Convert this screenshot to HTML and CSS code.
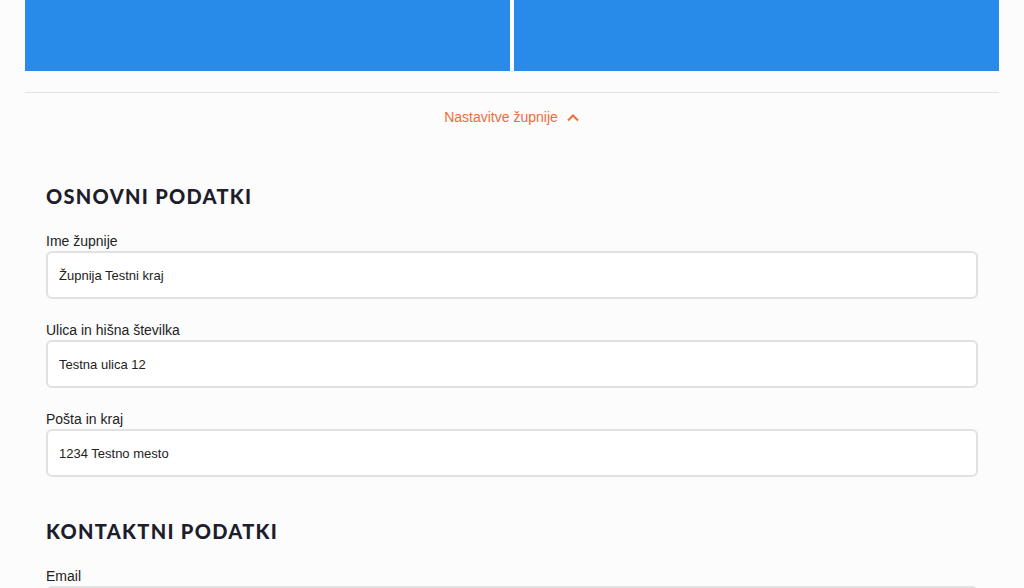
FILE: index.html
```html
<!DOCTYPE html>
<html lang="sl">
<head>
  <meta charset="UTF-8" />
  <meta name="viewport" content="width=device-width, initial-scale=1.0" />
  <title>Nastavitve župnije</title>
  <link rel="stylesheet" href="styles.css">
</head>
<body>
  <div class="page">
    <div class="tiles">
      <div class="tile"></div>
      <div class="tile"></div>
    </div>

    <div class="settings-toggle">
      <button class="toggle-btn">
        Nastavitve župnije
        <svg width="14" height="9" viewBox="0 0 14 9"><path d="M2 7.5 L7 2.5 L12 7.5" fill="none" stroke="currentColor" stroke-width="2"/></svg>
      </button>
    </div>

    <form class="settings">
      <h2>Osnovni podatki</h2>
      <div class="field">
        <label for="ime">Ime župnije</label>
        <input type="text" id="ime" value="Župnija Testni kraj" />
      </div>
      <div class="field">
        <label for="ulica">Ulica in hišna številka</label>
        <input type="text" id="ulica" value="Testna ulica 12" />
      </div>
      <div class="field">
        <label for="posta">Pošta in kraj</label>
        <input type="text" id="posta" value="1234 Testno mesto" />
      </div>

      <h2 class="next">Kontaktni podatki</h2>
      <div class="field">
        <label for="email">Email</label>
        <input type="text" id="email" value="" />
      </div>
    </form>
  </div>
</body>
</html>
```

FILE: styles.css
```css
html, body {
  margin: 0;
  padding: 0;
}

body {
  font-family: 'Liberation Sans', Arial, sans-serif;
  background: #fcfcfc;
  color: #222;
}

.page {
  padding: 0 25px;
}

.tiles {
  display: grid;
  grid-template-columns: 1fr 1fr;
  gap: 4px;
}

.tile {
  height: 71px;
  background: #288bea;
}

.settings-toggle {
  margin-top: 21px;
  border-top: 1px solid #e3e3e3;
  padding: 14px 0 16px;
  text-align: center;
}

.toggle-btn {
  background: none;
  border: none;
  padding: 0;
  font-family: inherit;
  font-size: 14px;
  line-height: 20px;
  color: #f26b3a;
  cursor: pointer;
  display: inline-flex;
  align-items: center;
  gap: 8px;
}

.settings {
  padding: 40px 21px 0;
}

.settings h2 {
  margin: 0 0 22px;
  font-family: Lato, 'Open Sans', sans-serif;
  font-weight: 900;
  font-size: 20px;
  line-height: 26px;
  letter-spacing: 1.3px;
  text-transform: uppercase;
  color: #1e1d2c;
}

.settings h2.next {
  margin-top: 41px;
}

.field {
  margin-bottom: 21px;
}

.field label {
  display: block;
  font-size: 14px;
  line-height: 20px;
  color: #222;
}

.field input {
  display: block;
  box-sizing: border-box;
  width: 100%;
  height: 48px;
  padding: 0 11px;
  border: 2px solid #e1e1e1;
  border-radius: 6px;
  background: #fff;
  font-family: inherit;
  font-size: 13px;
  color: #222;
}
```
